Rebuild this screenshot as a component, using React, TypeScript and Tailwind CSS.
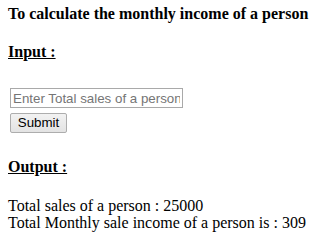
import React from 'react';

const App = () => {
    return (
        <div className="min-h-[247px] bg-white px-2 pt-[5px] text-black font-['Liberation_Serif',serif] text-base">
            <h4 className="font-bold leading-[18px]">To calculate the monthly income of a person</h4>

            <h4 className="mt-[20px] font-bold underline leading-[18px]">Input :</h4>

            <form className="mt-[27px] pl-[2px] flex flex-col items-start gap-[5px]" onSubmit={(e) => e.preventDefault()}>
                <input
                    type="text"
                    placeholder="Enter Total sales of a person"
                    className="h-[20px] w-[173px] border border-[#a9a9a9] bg-white px-[2px] font-['Liberation_Sans',sans-serif] text-[13.33px] text-black placeholder:text-[#757575] outline-none"
                />
                <button
                    type="submit"
                    className="h-[20px] w-[57px] rounded-[2px] border border-[#adadad] bg-gradient-to-b from-[#f2f2f2] to-[#e3e3e3] font-['Liberation_Sans',sans-serif] text-[13.33px] leading-none text-black"
                >
                    Submit
                </button>
            </form>

            <h4 className="mt-[25px] font-bold underline leading-[18px]">Output :</h4>

            <div className="mt-[21px] leading-[17px]">
                <p>Total sales of a person : 25000</p>
                <p>Total Monthly sale income of a person is : 309</p>
            </div>
        </div>
    );
};

export default App;
